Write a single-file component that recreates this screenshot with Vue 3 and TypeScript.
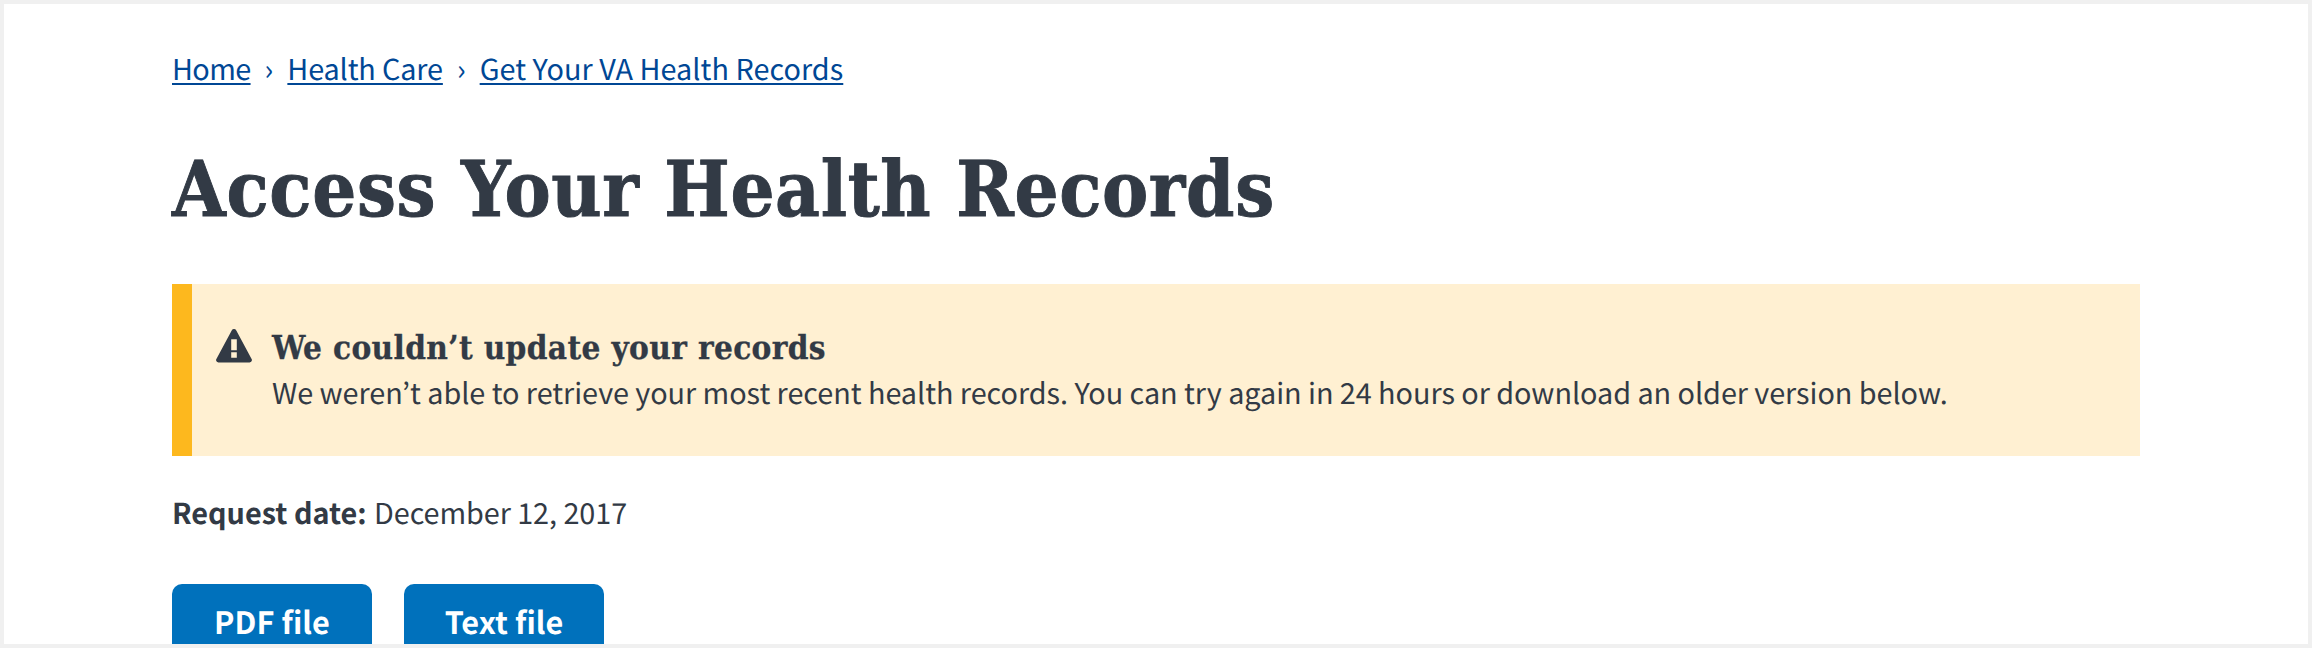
<script setup lang="ts">
const crumbs = [
  { label: 'Home', name: 'home' },
  { label: 'Health Care', name: 'section' },
  { label: 'Get Your VA Health Records', name: 'current' },
]
const files = ['PDF file', 'Text file']
</script>

<template>
  <main class="page">
    <nav class="breadcrumbs" aria-label="Breadcrumb">
      <template v-for="(crumb, i) in crumbs" :key="crumb.name">
        <span v-if="i" class="separator">›</span>
        <a :class="crumb.name" href="#">{{ crumb.label }}</a>
      </template>
    </nav>
    <h1>Access Your Health Records</h1>
    <section class="alert">
      <svg class="icon" viewBox="0 0 36 34" aria-hidden="true">
        <path fill-rule="evenodd" d="M15.7 1.4a2.6 2.6 0 0 1 4.6 0l15.3 28.5a2.4 2.4 0 0 1-2.2 3.6H2.6A2.4 2.4 0 0 1 .4 29.9ZM15.2 10.2v11h5.6v-11ZM15.2 23.3v5.4h5.6v-5.4Z" />
      </svg>
      <div>
        <h2>We couldn’t update your records</h2>
        <p class="message">We weren’t able to retrieve your most recent health records. You can try again in 24 hours or download an older version below.</p>
      </div>
    </section>
    <p class="request"><strong>Request date:</strong><span>December 12, 2017</span></p>
    <div class="actions">
      <button v-for="file in files" :key="file" class="button" type="button">{{ file }}</button>
    </div>
  </main>
</template>

<style>
body { margin: 0; }
</style>

<style scoped>
.page {
  box-sizing: border-box;
  height: 648px;
  padding: 45px 168px 0;
  border: 4px solid #f0f0f0;
  overflow: hidden;
  background: #fff;
  color: #323a45;
  font: 28.8px/40px "Noto Sans CJK KR", "Noto Sans", sans-serif;
  text-rendering: geometricPrecision;
}
h1, h2, p { margin: 0; }
.breadcrumbs { display: flex; height: 40px; color: #004795; white-space: nowrap; }
.breadcrumbs a {
  color: inherit;
  text-decoration: underline;
  text-decoration-thickness: 2px;
  text-decoration-skip-ink: none;
  text-underline-offset: 3px;
}
.breadcrumbs .home { letter-spacing: -.62px; }
.breadcrumbs .section { letter-spacing: -.14px; }
.breadcrumbs .current { letter-spacing: .04px; }
.separator { width: 36.8px; text-align: center; }
h1 {
  margin-top: 56px;
  font: bold 77px/90px "DejaVu Serif Condensed", "DejaVu Serif", serif;
  letter-spacing: .67px;
  -webkit-text-stroke: .9px #323a45;
}
.alert {
  display: flex;
  box-sizing: border-box;
  height: 172px;
  margin-top: 49px;
  padding: 42px 24px 0;
  border-left: 20px solid #fdb81e;
  background: #fff0d2;
}
.icon { flex: none; width: 36px; height: 34px; margin: 3px 20px 0 0; fill: #323a45; }
h2 {
  font: bold 33px/44px "DejaVu Serif Condensed", "DejaVu Serif", serif;
  letter-spacing: .36px;
  -webkit-text-stroke: .3px #323a45;
  white-space: nowrap;
}
.message { margin-top: 1px; line-height: 44px; letter-spacing: -.04px; white-space: nowrap; }
.request { display: flex; gap: 7.4px; margin-top: 37px; }
.request span { letter-spacing: -.06px; }
.actions { display: flex; gap: 32px; margin-top: 51px; }
.button {
  width: 200px;
  height: 80px;
  padding: 0 0 6px;
  border: 0;
  border-radius: 10px;
  background: #0071bc;
  color: #fff;
  font: bold 30.6px/44px "Noto Sans CJK KR", "Noto Sans", sans-serif;
  letter-spacing: .08px;
  text-rendering: geometricPrecision;
}
</style>
